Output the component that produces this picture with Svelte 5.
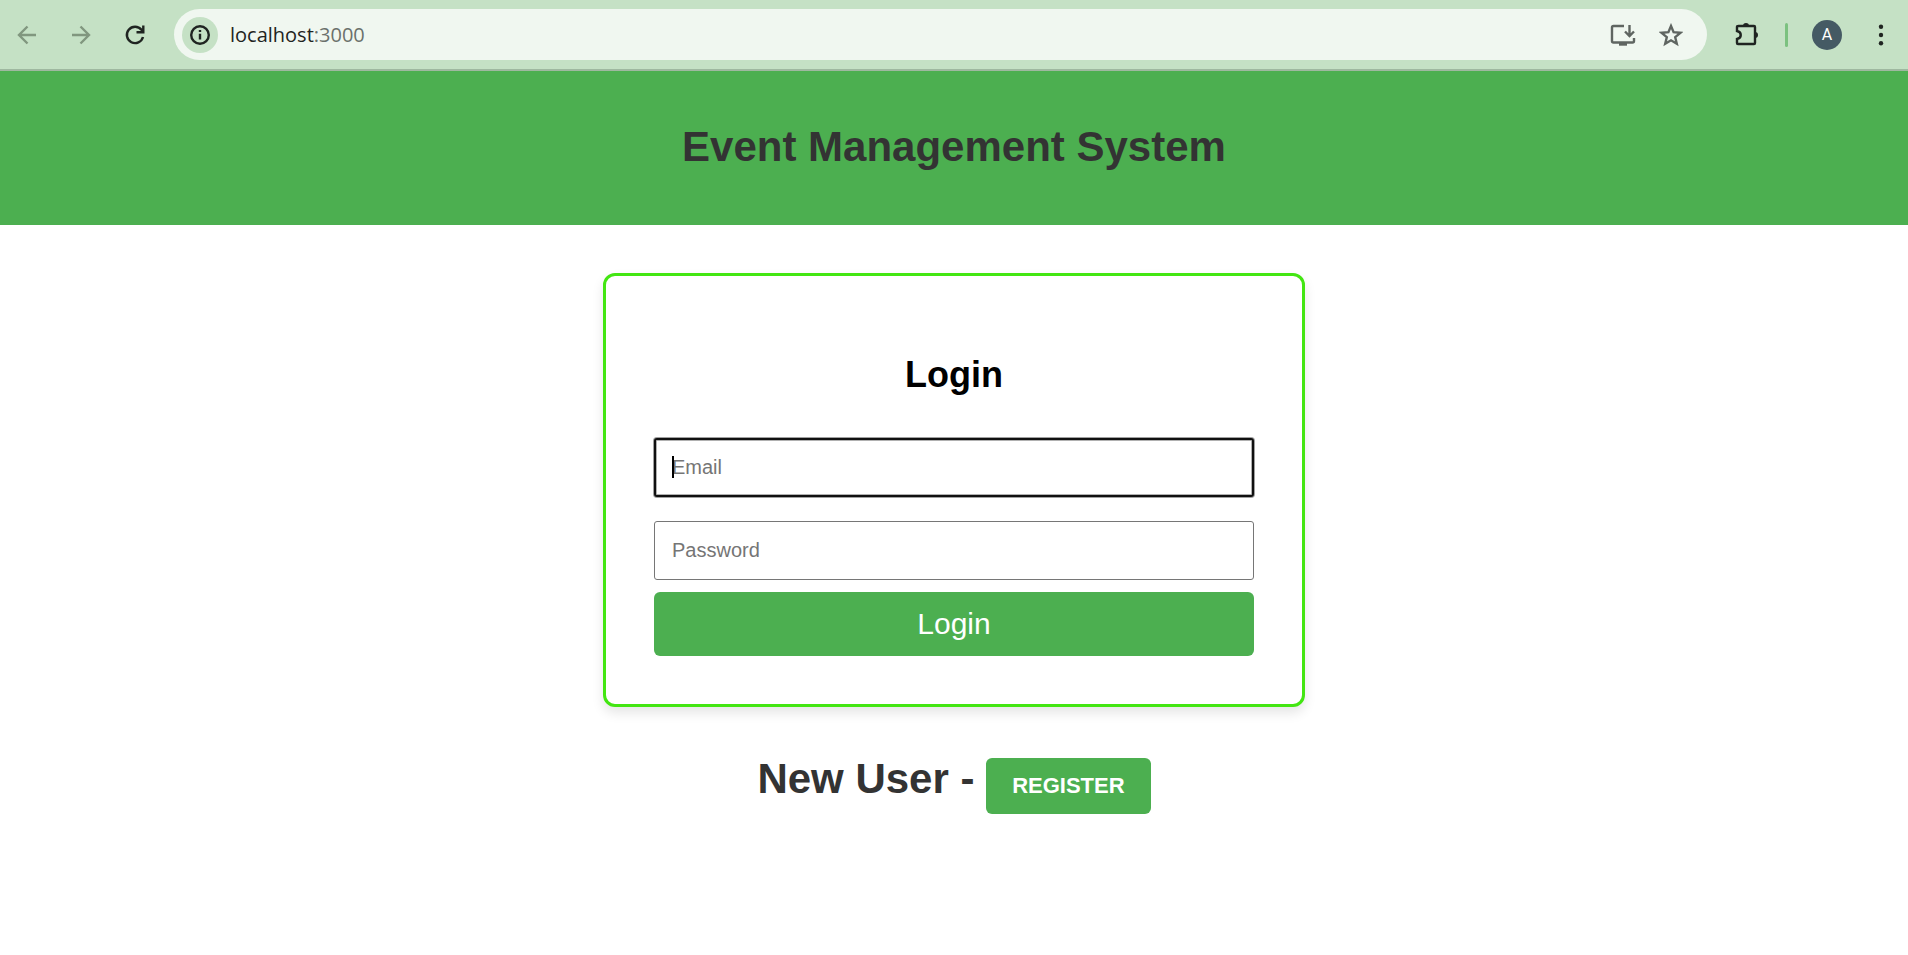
<script lang="ts">
  let email = $state('');
  let password = $state('');
</script>

<div class="toolbar">
  <button class="tool" aria-label="Back">
    <svg class="dim" width="24" height="24" viewBox="0 0 24 24"><path d="M21 12H4.500M12.500 3.500 4 12 12.500 20.500" /></svg>
  </button>
  <button class="tool" aria-label="Forward">
    <svg class="dim" width="24" height="24" viewBox="0 0 24 24"><path d="M3 12H19.500M11.500 3.500 20 12 11.500 20.500" /></svg>
  </button>
  <button class="tool" aria-label="Reload">
    <svg class="dark" width="24" height="24" viewBox="0 0 24 24"><path d="M20 14A8.200 8.200 0 1 1 18.500 6.800L20 8.500M20.300 2.500V9.300H13.500" /></svg>
  </button>
  <div class="address">
    <button class="site" aria-label="Site information">
      <svg class="dark" width="24" height="24" viewBox="0 0 24 24"><circle cx="12" cy="12" r="8.800" /><path d="M12 10.800V16.500M12 7V9" /></svg>
    </button>
    <span class="url">localhost<span class="port">:3000</span></span>
    <button class="tool" aria-label="Install app">
      <svg class="gray" width="26" height="24" viewBox="0 0 26 24"><path d="M14 3H3.500Q2 3 2 4.500V18Q2 19.500 3.500 19.500H22.500Q24 19.500 24 18V15M19.500 2V12M15 8.500 19.500 13 24 8.500" /><path d="M9 21.200H17" stroke-width="3" /></svg>
    </button>
    <button class="tool" aria-label="Bookmark">
      <svg class="gray" width="24" height="24" viewBox="0 0 24 24"><path d="M12 3 14.600 9.200 21.400 9.800 16.200 14.200 17.800 20.800 12 17.300 6.200 20.800 7.800 14.200 2.600 9.800 9.400 9.200Z" /></svg>
    </button>
  </div>
  <button class="tool" aria-label="Extensions">
    <svg class="dark" width="26" height="26" viewBox="0 1 26 26"><path d="M4.500 5H20Q21 5 21 6V22Q21 23 20 23H4Q3 23 3 22V18C8 17 8 11 3 10V6Q3 5 4.500 5Z" /><path class="solid" d="M9 5a3 3 0 0 1 6 0ZM21 11a3 3 0 0 1 0 6Z" /></svg>
  </button>
  <span class="divider"></span>
  <button class="avatar" aria-label="Profile">A</button>
  <button class="tool" aria-label="Menu">
    <svg width="24" height="24" viewBox="0 0 24 24" fill="#1f2421"><circle cx="12" cy="3.700" r="2.200" /><circle cx="12" cy="12" r="2.200" /><circle cx="12" cy="20.300" r="2.200" /></svg>
  </button>
</div>

<header><h1>Event Management System</h1></header>

<main>
  <form class="card" onsubmit={(e) => e.preventDefault()}>
    <h2>Login</h2>
    <div class="field focused">
      <input type="email" placeholder="Email" aria-label="Email" bind:value={email} />
      <span class="caret"></span>
    </div>
    <div class="field">
      <input type="password" placeholder="Password" aria-label="Password" bind:value={password} />
    </div>
    <button class="login" type="submit">Login</button>
  </form>
  <p class="new-user">New User - <button class="register">REGISTER</button></p>
</main>

<style>
  :global(body) {
    background: #fff;
    font-family: "Liberation Sans", Arial, sans-serif;
  }
  button {
    border: 0;
    padding: 0;
    background: none;
    font-family: inherit;
    cursor: pointer;
  }
  .toolbar {
    display: flex;
    align-items: center;
    box-sizing: border-box;
    height: 71px;
    padding: 0 15px;
    border-bottom: 2px solid #9fb8a0;
    background: #c5e1c5;
  }
  .tool {
    display: flex;
    flex: none;
  }
  .toolbar > .tool {
    margin-right: 30px;
  }
  svg {
    display: block;
  }
  .dim,
  .dark,
  .gray {
    fill: none;
    stroke-width: 2.4;
  }
  .dim {
    stroke: #81977f;
  }
  .dark {
    stroke: #1f2421;
  }
  .gray {
    stroke: #5f6561;
  }
  .solid {
    fill: #1f2421;
    stroke: none;
  }
  .address {
    display: flex;
    flex: 1;
    align-items: center;
    height: 51px;
    margin: 0 27px 0 -3px;
    padding: 0 24px 0 8px;
    border-radius: 26px;
    background: #f0f7f0;
  }
  .site {
    display: flex;
    align-items: center;
    justify-content: center;
    width: 36px;
    height: 36px;
    border-radius: 50%;
    background: #c5e1c5;
  }
  .url {
    flex: 1;
    margin-left: 12px;
    color: #1f2421;
    font: 20px "Open Sans", sans-serif;
  }
  .port {
    color: #6b716c;
  }
  .address .tool + .tool {
    margin-left: 23px;
  }
  .toolbar > .address + .tool {
    margin-right: 25px;
  }
  .divider {
    width: 3px;
    height: 24px;
    border-radius: 2px;
    background: #7cc180;
  }
  .avatar {
    width: 30px;
    height: 30px;
    margin: 0 27px 0 24px;
    border-radius: 50%;
    background: #455a64;
    color: #fff;
    font: 16px Roboto, sans-serif;
  }
  .toolbar > .tool:last-child {
    margin-right: 0;
  }
  header {
    padding: 52px 24px 54px;
    background: #4caf50;
    text-align: center;
  }
  h1 {
    margin: 0;
    color: #333;
    font-size: 42px;
    line-height: 48px;
  }
  main {
    display: flex;
    flex-direction: column;
    align-items: center;
    padding-top: 48px;
  }
  .card {
    box-sizing: border-box;
    width: 100%;
    max-width: 702px;
    padding: 48px;
    border: 3px solid #43e612;
    border-radius: 12px;
    background: #fff;
    box-shadow: 0 6px 12px rgba(0, 0, 0, 0.1);
  }
  h2 {
    margin: 30px 0 42px;
    font-size: 36px;
    line-height: 42px;
    text-align: center;
  }
  .field {
    position: relative;
    margin-top: 24px;
  }
  h2 + .field {
    margin-top: 0;
  }
  input {
    display: block;
    box-sizing: border-box;
    width: 100%;
    height: 59px;
    padding: 0 17px;
    border: 1px solid #767676;
    border-radius: 3px;
    outline: 0;
    font: 20px "Liberation Sans", Arial, sans-serif;
  }
  input::placeholder {
    color: #757575;
  }
  .focused input {
    padding: 0 16px;
    border: 2px solid #101010;
    box-shadow: 0 0 0 1px #a0a0a0, inset 0 0 0 1px #b0b0b0;
  }
  .caret {
    position: absolute;
    top: 18px;
    left: 18px;
    width: 2px;
    height: 22px;
    background: #000;
  }
  .login {
    display: block;
    width: 100%;
    height: 64px;
    margin-top: 12px;
    border-radius: 6px;
    background: #4caf50;
    color: #fff;
    font-size: 30px;
  }
  .new-user {
    margin: 48px 0 0;
    color: #333;
    font-size: 42px;
    font-weight: bold;
    line-height: 48px;
  }
  .register {
    height: 56px;
    padding: 0 26px;
    border-radius: 6px;
    background: #4caf50;
    color: #fff;
    font-size: 22px;
    font-weight: bold;
  }
</style>
